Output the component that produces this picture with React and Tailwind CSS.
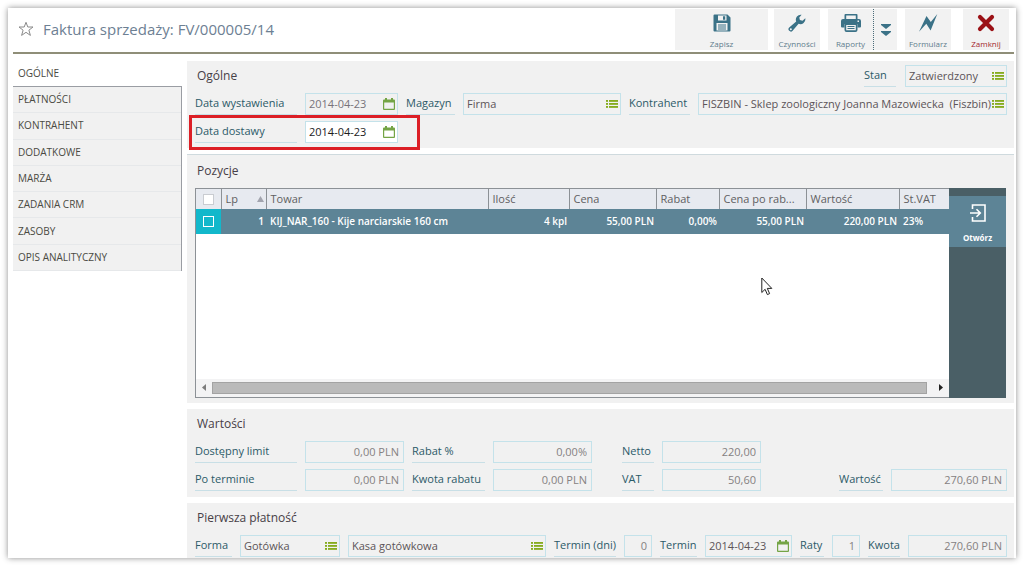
import React from 'react';

const menuItems = [
  'PŁATNOŚCI', 'KONTRAHENT', 'DODATKOWE', 'MARŻA',
  'ZADANIA CRM', 'ZASOBY', 'OPIS ANALITYCZNY',
];

const columns = [
  { label: 'Lp', width: 'w-[45px]', sorted: true },
  { label: 'Towar', width: 'w-auto' },
  { label: 'Ilość', width: 'w-[81px]' },
  { label: 'Cena', width: 'w-[87px]' },
  { label: 'Rabat', width: 'w-[63px]' },
  { label: 'Cena po rab...', width: 'w-[87px]' },
  { label: 'Wartość', width: 'w-[93px]' },
  { label: 'St.VAT', width: 'w-[50px]' },
];

// Icons
const StarIcon = () => (
  <svg className="w-4 h-4" viewBox="0 0 16 16" fill="none" stroke="#8a8a8a" strokeWidth="1">
    <path d="M8 1.3 9.8 6H15l-4.1 3.2 1.5 5.2L8 11.3l-4.4 3.1 1.5-5.2L1 6h5.2z" />
  </svg>
);

const SaveIcon = () => (
  <svg className="w-[18px] h-[18px]" viewBox="0 0 18 18">
    <path fill="#3b7287" fillRule="evenodd" d="M1.5.5h13l3 3v13a1 1 0 0 1-1 1h-15a1 1 0 0 1-1-1v-15a1 1 0 0 1 1-1zM5 1.500v5h8.500v-5zM3.500 9v7.500h11V9z" />
    <path fill="#3b7287" d="M10 2.200h2.200v3.500H10zM5 10.500h8v1H5zM5 12.500h8v1H5zM5 14.500h8v1H5z" />
  </svg>
);

const WrenchIcon = () => (
  <svg className="w-[18px] h-[18px]" viewBox="0 0 18 18">
    <path fill="#3b7287" fillRule="evenodd" d="M17.300 4.200a5 5 0 0 1-6.700 5.600l-6 7a2.300 2.300 0 0 1-3.400-3.300l7-6A5 5 0 0 1 13.600.7l-2.300 2.900.6 2.500 2.600.6zM2.800 14.200a1 1 0 1 0 .1 2 1 1 0 0 0-.1-2z" />
  </svg>
);

const PrinterIcon = () => (
  <svg className="w-5 h-[18px]" viewBox="0 0 20 18">
    <path fill="#3b7287" fillRule="evenodd" d="M3.500 5V1a1 1 0 0 1 1-1h11a1 1 0 0 1 1 1v4h-1.700V1.600H5.200V5z" />
    <path fill="#3b7287" fillRule="evenodd" d="M2 5h16a2 2 0 0 1 2 2v5.500a1 1 0 0 1-1 1h-2.500V10h-13v3.500H1a1 1 0 0 1-1-1V7a2 2 0 0 1 2-2zm14.500 1.500v1.500H18V6.500z" />
    <path fill="#3b7287" fillRule="evenodd" d="M3.500 9.500h13V16a2 2 0 0 1-2 2h-9a2 2 0 0 1-2-2zM5.200 11v5.300h9.600V11z" />
    <path fill="#3b7287" d="M6.500 12h7v1h-7zM6.500 14h7v1h-7z" />
  </svg>
);

const BoltIcon = () => (
  <svg className="w-5 h-[18px]" viewBox="0 0 20 18">
    <path fill="#3b7287" d="M1 17.800 8.500 2l4.300 6L19.300 0 12.600 16.500 8.300 9.800z" />
  </svg>
);

const CloseIcon = () => (
  <svg className="w-[18px] h-[18px]" viewBox="0 0 18 18" stroke="#9b1116" strokeWidth="4.200" strokeLinecap="round">
    <path d="M3 3l12 12M15 3 3 15" />
  </svg>
);

const ChevronsIcon = () => (
  <svg className="w-[10px] h-[12px]" viewBox="0 0 10 12" fill="#3b7287">
    <path d="M0 0h10v1L5 5 0 1zM0 7h10v1l-5 4-5-4z" />
  </svg>
);

const ListIcon = () => (
  <svg className="w-3 h-[10px]" viewBox="0 0 12 10" fill="#86ac1e">
    <path d="M0 1h2v2H0zM0 4h2v2H0zM0 7h2v2H0zM3 1h9v2H3zM3 4h9v2H3zM3 7h9v2H3z" opacity=".85" />
    <path d="M0 1h2v1H0zM0 4h2v1H0zM0 7h2v1H0zM3 1h9v1H3zM3 4h9v1H3zM3 7h9v1H3z" />
  </svg>
);

const CalendarIcon = () => (
  <svg className="w-3 h-3" viewBox="0 0 12 12" fill="#74a445">
    <path fillRule="evenodd" d="M1 1.500h10a1 1 0 0 1 1 1V11a1 1 0 0 1-1 1H1a1 1 0 0 1-1-1V2.500a1 1 0 0 1 1-1zM1.200 4.500v6.300h9.600V4.500z" />
    <path d="M2 0h2v3H2zM8 0h2v3H8z" />
  </svg>
);

const OpenIcon = () => (
  <svg className="w-4 h-[18px]" viewBox="0 0 16 18" fill="none" stroke="#fff" strokeWidth="1.600">
    <path d="M2.500 5V1h12.500v16H2.500v-4M0 9h10M6.500 5.200 10.300 9l-3.800 3.800" />
  </svg>
);

const fieldIcons = {
  list: { icon: <ListIcon />, title: 'Wybierz z listy' },
  calendar: { icon: <CalendarIcon />, title: 'Wybierz datę' },
};

const Label = ({ htmlFor, className = '', children }) => (
  <label htmlFor={htmlFor} className={`h-[22px] shrink-0 border-b border-[#c8dfe6] leading-5 text-[#2c5a68] whitespace-nowrap ${className}`}>
    {children}
  </label>
);

const Field = ({ id, value, icon, label, className = '', tone = 'text-[#5c5458]', align = 'text-left' }) => (
  <div className={`h-[22px] min-w-0 flex items-center border border-[#c4e2ea] ${className}`}>
    <input
      id={id}
      type="text"
      defaultValue={value}
      aria-label={label}
      className={`min-w-0 w-full flex-1 h-full pb-0.5 bg-transparent outline-none ${icon ? 'pl-[3px]' : 'px-1'} ${tone} ${align}`}
    />
    {icon && (
      <button type="button" title={fieldIcons[icon].title} className="shrink-0 pr-[2px]">
        {fieldIcons[icon].icon}
      </button>
    )}
  </div>
);

const NumberField = (props) => <Field tone="text-[#858182]" align="text-right" {...props} />;

const Section = ({ title, extra, className = 'pt-1 pb-1.5', children }) => (
  <section className={`bg-[#f1f1f1] pl-2 pr-[7px] flex flex-col gap-1.5 ${className}`}>
    <div className="flex items-center h-[22px]">
      <h2 className="flex-1 pl-[2px] text-[12px] text-[#474047]">{title}</h2>
      {extra}
    </div>
    {children}
  </section>
);

const ToolButton = ({ icon, label, className = 'w-[46px]', color = 'text-[#5f7d8d]' }) => (
  <button type="button" className={`h-[41px] bg-[#f2f2f2] flex flex-col items-center justify-between pt-[5px] text-[8px] ${color} ${className}`}>
    {icon}
    <span className="leading-[13px]">{label}</span>
  </button>
);

const Header = () => (
  <header className="flex items-start h-[46px] pt-px pr-[5px] border-b-2 border-[#8f8e78]">
    <div className="flex-1 h-10 flex items-center gap-[9px] pl-[5px]">
      <button type="button" title="Ulubione"><StarIcon /></button>
      <h1 className="text-[15px] text-[#6d8093]">Faktura sprzedaży: FV/000005/14</h1>
    </div>
    <ToolButton icon={<SaveIcon />} label="Zapisz" className="w-[93px]" />
    <div className="pl-1.5"><ToolButton icon={<WrenchIcon />} label="Czynności" /></div>
    <div className="pl-2 flex">
      <ToolButton icon={<PrinterIcon />} label="Raporty" className="w-[45px]" />
      <button type="button" title="Więcej" className="w-6 h-[41px] bg-[#f2f2f2] border-l border-dotted border-[#4b6b78] flex items-center justify-center">
        <ChevronsIcon />
      </button>
    </div>
    <div className="pl-2"><ToolButton icon={<BoltIcon />} label="Formularz" /></div>
    <div className="pl-3"><ToolButton icon={<CloseIcon />} label="Zamknij" color="text-[#a3262c]" /></div>
  </header>
);

const SideMenu = () => (
  <nav className="w-[169px] shrink-0 text-[10px] text-[#4a4a42]">
    <a href="#ogolne" className="flex items-center h-[25px] pl-[5px]">OGÓLNE</a>
    <div className="h-[185px] flex flex-col border-t border-r border-[#9a9da3]">
      {menuItems.map((item) => (
        <a key={item} href="#menu" className="flex-1 flex items-center pl-[5px] bg-[#f1f1f1] border-b border-[#e6e8ea]">
          {item}
        </a>
      ))}
    </div>
  </nav>
);

const ItemsTable = () => (
  <div className="flex h-[210px] pr-px">
    <div className="relative flex-1 min-w-0 flex flex-col bg-white border-l border-t border-b border-[#8c9196]">
      <table className="w-full table-fixed border-collapse">
        <thead>
          <tr className="h-5 bg-[#e7eaf0] text-[#5f5f62]">
            <th className="w-[25px] p-0">
              <input type="checkbox" aria-label="Zaznacz wszystko" className="block mx-auto size-[11px] appearance-none bg-white border border-[#c9ccd1]" />
            </th>
            {columns.map((col) => (
              <th key={col.label} className={`p-0 pl-1 border-l border-[#8c9196] text-left font-normal whitespace-nowrap ${col.width}`}>
                <div className="flex items-center justify-between pr-[2px]">
                  {col.label}
                  {col.sorted && (
                    <svg className="w-[7px] h-[6px]" viewBox="0 0 7 6" fill="#a2a4ae"><path d="M3.500 0 7 6H0z" /></svg>
                  )}
                </div>
              </th>
            ))}
          </tr>
        </thead>
        <tbody>
          <tr className="h-[25px] bg-[#5d8496] text-white text-[10px] font-semibold text-right whitespace-nowrap">
            <td className="p-0 bg-[#12b8cb]">
              <input type="checkbox" aria-label="Zaznacz pozycję 1" className="block mx-auto size-[11px] appearance-none border border-white" />
            </td>
            <td className="p-0 pr-[2px]">1</td>
            <td className="p-0 pl-1 text-left">KIJ_NAR_160 - Kije narciarskie 160 cm</td>
            <td className="p-0 pr-[2px]">4 kpl</td>
            <td className="p-0 pr-[2px]">55,00 PLN</td>
            <td className="p-0 pr-[2px]">0,00%</td>
            <td className="p-0 pr-[2px]">55,00 PLN</td>
            <td className="p-0 pr-[2px]">220,00 PLN</td>
            <td className="p-0 pl-1 text-left">23%</td>
          </tr>
        </tbody>
      </table>

      {/* Mouse pointer */}
      <svg className="absolute left-[565px] top-[88px] w-3 h-[19px]" viewBox="0 0 12 19" fill="#fff" stroke="#222">
        <path d="M.8 1v14.500l3.300-3.200 2.300 5.300 2.200-1-2.300-5.200h4.500z" />
      </svg>

      {/* Horizontal scrollbar */}
      <div className="mt-auto h-[18px] flex items-center gap-1.5 pl-1.5 pr-1.5 pb-px bg-[#f3f3f4]">
        <svg className="w-1 h-[7px]" viewBox="0 0 4 7" fill="#7c7c7c"><path d="M4 0v7L0 3.500z" /></svg>
        <div className="flex-1 h-3 bg-[#bababa] border border-[#a3a3a3]" />
        <svg className="ml-1.5 w-1 h-[7px]" viewBox="0 0 4 7" fill="#222"><path d="M0 0v7l4-3.500z" /></svg>
      </div>
    </div>
    <aside className="w-[57px] shrink-0 pt-2 bg-[#4a5f66]">
      <button type="button" className="w-full h-[51px] bg-[#5d8496] flex flex-col items-center justify-between pt-2 pb-[3px] text-[8px] font-bold text-white">
        <OpenIcon />
        <span className="leading-[13px]">Otwórz</span>
      </button>
    </aside>
  </div>
);

export default function App() {
  return (
    <div className="p-2 bg-white font-['Open_Sans','Noto_Sans',sans-serif] text-[11px]">
      <div className="bg-white pl-[5px] pr-[2px] overflow-hidden shadow-[0_0_6px_rgba(0,0,0,0.45)]">
        <Header />
        <div className="flex items-start gap-[5px] pt-[7px]">
          <SideMenu />

          <main className="flex-1 min-w-0 flex flex-col gap-1.5">
            <Section
              title="Ogólne"
              className="pt-1 pb-[5px]"
              extra={
                <div className="flex gap-[9px]">
                  <Label htmlFor="stan" className="w-8">Stan</Label>
                  <Field id="stan" value="Zatwierdzony" icon="list" className="w-[102px]" />
                </div>
              }
            >
              <div className="flex gap-2">
                <Label htmlFor="wystawienia" className="w-[102px]">Data wystawienia</Label>
                <Field id="wystawienia" value="2014-04-23" icon="calendar" className="w-[93px]" tone="text-[#77737a]" />
                <Label htmlFor="magazyn" className="w-[49px]">Magazyn</Label>
                <Field id="magazyn" value="Firma" icon="list" className="flex-1" />
                <Label htmlFor="kontrahent" className="w-[61px]">Kontrahent</Label>
                <Field id="kontrahent" value="FISZBIN - Sklep zoologiczny Joanna Mazowiecka  (Fiszbin)" icon="list" className="w-[309px]" />
              </div>
              <div className="relative flex gap-2">
                <Label htmlFor="dostawy" className="w-[102px]">Data dostawy</Label>
                <Field id="dostawy" value="2014-04-23" icon="calendar" className="w-[93px] bg-white" tone="text-[#1c1c1c]" />
                {/* Highlight frame */}
                <div className="absolute -left-1.5 -top-1.5 w-[231px] h-[35px] border-3 border-[#dc1f26] pointer-events-none" />
              </div>
            </Section>

            <Section title="Pozycje" className="pt-[5px] pb-[5px] border-t border-[#cfdade]">
              <ItemsTable />
            </Section>

            <Section title="Wartości">
              <div className="flex items-end">
                <div className="grid grid-cols-[102px_99px_73px_99px] gap-x-2 gap-y-1.5">
                  <Label htmlFor="limit">Dostępny limit</Label>
                  <NumberField id="limit" value="0,00 PLN" />
                  <Label htmlFor="rabat">Rabat %</Label>
                  <NumberField id="rabat" value="0,00%" />
                  <Label htmlFor="poterminie">Po terminie</Label>
                  <NumberField id="poterminie" value="0,00 PLN" />
                  <Label htmlFor="kwotarabatu">Kwota rabatu</Label>
                  <NumberField id="kwotarabatu" value="0,00 PLN" />
                </div>
                <div className="ml-[30px] grid grid-cols-[32px_99px] gap-x-2 gap-y-1.5">
                  <Label htmlFor="netto">Netto</Label>
                  <NumberField id="netto" value="220,00" />
                  <Label htmlFor="vat">VAT</Label>
                  <NumberField id="vat" value="50,60" />
                </div>
                <div className="ml-auto flex gap-2">
                  <Label htmlFor="wartosc" className="w-11">Wartość</Label>
                  <NumberField id="wartosc" value="270,60 PLN" className="w-[116px]" />
                </div>
              </div>
            </Section>

            <Section title="Pierwsza płatność" className="pt-1 pb-px">
              <div className="flex gap-2">
                <Label htmlFor="forma" className="w-[37px]">Forma</Label>
                <Field id="forma" value="Gotówka" icon="list" className="w-[100px]" />
                <Field label="Kasa" value="Kasa gotówkowa" icon="list" className="flex-1" />
                <Label htmlFor="termindni" className="w-[62px]">Termin (dni)</Label>
                <NumberField id="termindni" value="0" className="w-7" />
                <Label htmlFor="termin" className="w-[37px]">Termin</Label>
                <Field id="termin" value="2014-04-23" icon="calendar" className="w-[87px]" />
                <Label htmlFor="raty" className="w-6">Raty</Label>
                <NumberField id="raty" value="1" className="w-7" />
                <Label htmlFor="kwota" className="w-8">Kwota</Label>
                <NumberField id="kwota" value="270,60 PLN" className="w-[99px]" />
              </div>
            </Section>
          </main>
        </div>
      </div>
    </div>
  );
}
